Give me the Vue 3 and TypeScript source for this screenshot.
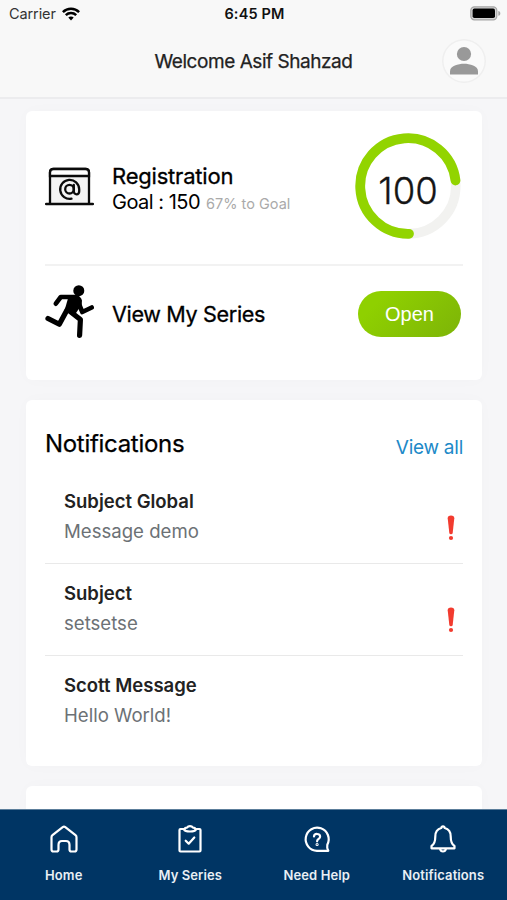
<script setup lang="ts">
interface Notice {
  subject: string
  message: string
  urgent: boolean
}

interface Tab {
  label: string
  icon: 'home' | 'series' | 'help' | 'bell'
}

const goal = { title: 'Registration', target: 150, percent: 67, value: 100 }

const notices: Notice[] = [
  { subject: 'Subject Global', message: 'Message demo', urgent: true },
  { subject: 'Subject', message: 'setsetse', urgent: true },
  { subject: 'Scott Message', message: 'Hello World!', urgent: false },
]

const tabs: Tab[] = [
  { label: 'Home', icon: 'home' },
  { label: 'My Series', icon: 'series' },
  { label: 'Need Help', icon: 'help' },
  { label: 'Notifications', icon: 'bell' },
]
</script>

<template>
  <div class="screen">
    <header class="header">
      <div class="status">
        <div class="carrier">
          <span class="carrier-name">Carrier</span>
          <svg class="wifi" viewBox="0 0 18 14" fill="none" stroke="#000" stroke-width="2.5">
            <path d="M.9 5.1C5.4.7 12.6.7 17.1 5.1" />
            <path d="M3.8 8.2c2.9-2.8 7.5-2.8 10.4 0" />
            <path d="M6.3 10.6c1.5-1.5 3.9-1.5 5.4 0L9 13.5z" fill="#000" stroke="none" />
          </svg>
        </div>
        <span class="clock">6:45 PM</span>
        <svg class="battery" viewBox="0 0 31 15">
          <rect x=".8" y=".8" width="26" height="13" rx="3.6" fill="#d5d5d5" stroke="#a5a5a5" stroke-width="1.2" />
          <rect x="2.6" y="2.6" width="22.4" height="9.4" rx="1.8" fill="#000" />
          <path d="M28.3 5c1.5.3 2 1.300 2 2.400s-.5 2.100-2 2.400z" fill="#a5a5a5" />
        </svg>
      </div>
      <div class="titlebar">
        <h1 class="welcome">Welcome Asif Shahzad</h1>
        <button class="avatar" type="button" aria-label="Profile">
          <svg viewBox="0 0 44 44">
            <circle cx="22" cy="15" r="7.1" fill="#999" />
            <path d="M8 35.500v-3.300c0-5.400 8.300-7.400 14-7.400s14 2 14 7.400v3.300z" fill="#999" />
          </svg>
        </button>
      </div>
    </header>

    <main class="content">
      <section class="card summary">
        <div class="goal-row">
          <svg class="laptop" viewBox="0 0 49 39" fill="none" stroke="#0b0b0b" stroke-linecap="round" stroke-width="2.300">
            <path d="M5 36V5.500Q5 2 8.500 2h32Q44 2 44 5.500V36" fill="#f3f3f3" />
            <path d="M5 9V5.500Q5 2 8.500 2h32Q44 2 44 5.500V9z" fill="#fff" />
            <path d="M1.200 37h46.600" stroke-width="2.500" />
            <path d="M26.500 31.700a9.500 9.500 0 1 1 7.700-9.500v2.100c0 4-5.400 4-5.400 0v-6.500" />
            <circle cx="24.500" cy="22.200" r="4.300" />
          </svg>
          <div class="goal-text">
            <h2 class="row-title">{{ goal.title }}</h2>
            <p class="goal-line">
              <span class="goal-target">Goal : {{ goal.target }}</span>
              <span class="goal-percent">{{ goal.percent }}% to Goal</span>
            </p>
          </div>
          <div class="ring">
            <svg viewBox="0 0 106 106" fill="none" stroke-linecap="round">
              <circle cx="53" cy="53" r="47.800" stroke="#f2f2f0" stroke-width="9.500" />
              <path d="M54 100.800A47.800 47.800 0 1 1 100.500 47.500" stroke="#92d400" stroke-width="9.800" />
            </svg>
            <span class="ring-value">{{ goal.value }}</span>
          </div>
        </div>
        <div class="series-row">
          <svg class="runner" viewBox="0 0 49 54">
            <circle cx="33.800" cy="5.700" r="5.500" />
            <g fill="none" stroke="#000" stroke-linecap="round" stroke-linejoin="round" stroke-width="4.600">
              <path d="M10.800 18.700 15.800 12H30" />
              <path d="M32.500 15.500 37.300 27 46.700 22.500" />
              <path d="M22 25 14.300 39.300 3 33.500" stroke-width="5.200" />
              <path d="M24.500 26 35.400 34.500 34.600 50.300" stroke-width="5.200" />
            </g>
            <path d="M24 10h8q3.500 1 5 5.500l-.3 4L29 31l-9.500-5.500z" />
          </svg>
          <h2 class="row-title series-title">View My Series</h2>
          <button class="open" type="button">Open</button>
        </div>
      </section>

      <section class="card notices">
        <div class="notices-head">
          <h2 class="notices-title">Notifications</h2>
          <a class="view-all">View all</a>
        </div>
        <ul class="notice-list">
          <li v-for="notice in notices" :key="notice.subject" class="notice">
            <div class="notice-text">
              <h3 class="subject">{{ notice.subject }}</h3>
              <p class="message">{{ notice.message }}</p>
            </div>
            <svg v-if="notice.urgent" class="urgent" viewBox="0 0 8 26" fill="#f23b2f">
              <path d="M.7 3.300Q.7.500 4 .500t3.300 2.800L5.700 18Q5.500 19.300 4 19.300T2.300 18z" />
              <ellipse cx="4" cy="22.900" rx="2.100" ry="2" />
            </svg>
          </li>
        </ul>
      </section>

      <section class="card next"></section>
    </main>

    <nav class="tabs">
      <a v-for="tab in tabs" :key="tab.label" class="tab">
        <svg
          class="tab-icon"
          viewBox="0 0 30 30"
          fill="none"
          stroke="#fff"
          stroke-width="2.200"
          stroke-linecap="round"
          stroke-linejoin="round"
        >
          <template v-if="tab.icon === 'home'">
            <path d="M2.500 12.200Q2.500 11 3.500 10.200L13.700 2.200Q15 1.200 16.300 2.200L26.500 10.200Q27.500 11 27.500 12.200V24.500Q27.500 26.500 25.500 26.500H22.500Q20.500 26.500 20.500 24.500V20Q20.500 16 17 16H13Q9.500 16 9.500 20V24.500Q9.500 26.500 7.500 26.500H4.500Q2.500 26.500 2.500 24.500Z" />
          </template>
          <template v-else-if="tab.icon === 'series'">
            <path d="M9.500 4H5.500Q4.500 4 4.500 5V25.500Q4.500 26.500 5.500 26.500H24.500Q25.500 26.500 25.500 25.500V5Q25.500 4 24.500 4H20.500" />
            <path d="M9 4.500Q10 2.700 12 2.700 13 1.200 15 1.200T18 2.700Q20 2.700 21 4.500 20 6.500 15 6.500T9 4.500Z" />
            <path d="M10.700 15.700 13.700 18.700 19.300 12.500" />
          </template>
          <template v-else-if="tab.icon === 'help'">
            <path d="M26.300 25.800H15A11.500 11.600 0 1 1 25.300 19.700Q24.700 22.500 26.300 25.800Z" />
            <path d="M12 11.500C12.200 8 18.300 8.200 18.100 11.700 18 14 15.100 13.800 15.100 16.300" />
            <circle cx="15.100" cy="19.500" r=".5" />
          </template>
          <template v-else>
            <path d="M15 1.300Q16.500 1.300 16.700 3C21 4 22.700 7.200 22.700 11.500 22.700 16.500 24 19.500 26.500 21V23.300H3.500V21C6 19.500 7.300 16.500 7.300 11.500 7.300 7.200 9 4 13.300 3Q13.500 1.300 15 1.300Z" />
            <path d="M12.200 24.300Q12.700 26.500 15 26.500T17.800 24.300" />
          </template>
        </svg>
        <span class="tab-label">{{ tab.label }}</span>
      </a>
    </nav>
  </div>
</template>

<style>
body {
  margin: 0;
  background: #f6f6f8;
}
</style>

<style scoped>
.screen {
  display: flex;
  flex-direction: column;
  height: 900px;
  overflow: hidden;
  background: #f6f6f8;
  color: #000;
  font-family: Inter, 'Liberation Sans', sans-serif;
  white-space: nowrap;
}
h1,
h2,
h3,
p,
ul {
  margin: 0;
  padding: 0;
  font-weight: 400;
}
svg {
  display: block;
  flex: none;
}
button {
  border: 0;
  padding: 0;
}
.header {
  flex: none;
  height: 97px;
  background: #f8f8f8;
  border-bottom: 2px solid #ececee;
}
.status {
  display: grid;
  grid-template-columns: 1fr auto 1fr;
  align-items: center;
  height: 27px;
  padding: 0 6px 0 8px;
}
.carrier {
  display: flex;
  align-items: center;
  gap: 6px;
}
.carrier-name {
  padding-left: 1px;
  font-size: 14.500px;
  letter-spacing: -0.100px;
  color: #333;
}
.wifi {
  width: 18px;
  height: 14px;
}
.clock {
  font-size: 14.500px;
  letter-spacing: 0.150px;
  font-weight: 600;
  color: #111;
}
.battery {
  justify-self: end;
  width: 31px;
  height: 15px;
}
.titlebar {
  display: grid;
  grid-template-columns: 1fr auto 1fr;
  align-items: center;
  height: 67px;
  padding: 0 21px;
}
.welcome {
  grid-column: 2;
  padding-top: 1px;
  font-size: 19px;
  letter-spacing: -0.450px;
  color: #222;
  -webkit-text-stroke: 0.250px #222;
}
.avatar {
  justify-self: end;
  width: 44px;
  height: 44px;
  background: #fafafa;
  border-radius: 50%;
  box-shadow: inset 0 0 0 1.5px #efefef;
}
.content {
  display: flex;
  flex: 1;
  flex-direction: column;
  gap: 20px;
  min-height: 0;
  padding: 12px 25px 0 26px;
  overflow: hidden;
}
.card {
  flex: none;
  box-sizing: border-box;
  background: #fff;
  border-radius: 6px;
  box-shadow: 0 0 16px rgba(20, 30, 70, 0.02);
}
.summary {
  height: 269px;
  padding: 0 19px;
}
.goal-row {
  display: flex;
  align-items: center;
  box-sizing: border-box;
  height: 155px;
  padding-right: 2px;
  padding-bottom: 5px;
  border-bottom: 2px solid #f2f2f2;
}
.laptop {
  width: 49px;
  height: 39px;
  margin-top: 3px;
}
.goal-text {
  flex: 1;
  margin-left: 18px;
  padding-top: 9px;
}
.row-title {
  font-size: 22px;
  line-height: 26px;
  letter-spacing: -0.200px;
  -webkit-text-stroke: 0.300px #000;
}
.goal-line {
  display: flex;
  align-items: baseline;
  gap: 6px;
  line-height: 26px;
}
.goal-target {
  font-size: 20px;
  letter-spacing: -0.500px;
}
.goal-percent {
  font-size: 14.500px;
  color: #aaa;
}
.ring {
  display: grid;
  place-items: center;
  width: 106px;
  height: 106px;
  margin-top: 1px;
}
.ring > * {
  grid-area: 1 / 1;
}
.ring-value {
  padding-top: 11px;
  font-size: 36.500px;
  color: #151515;
  font-weight: 300;
  -webkit-text-stroke: 0.300px #151515;
}
.series-row {
  display: flex;
  align-items: center;
  height: 95px;
  padding-right: 2px;
}
.runner {
  width: 49px;
  height: 54px;
  margin-bottom: 3px;
}
.series-title {
  flex: 1;
  margin-left: 18px;
  padding-top: 1px;
  font-size: 21.600px;
  letter-spacing: -0.350px;
}
.open {
  width: 103px;
  height: 46px;
  padding-top: 1px;
  background: linear-gradient(135deg, #8fd000 20%, #7db408);
  border-radius: 23px;
  color: #fff;
  font: 20px 'Liberation Sans', Arial, sans-serif;
}
.notices {
  height: 366px;
  padding: 24px 19px 0;
}
.notices-head {
  display: flex;
  align-items: baseline;
  justify-content: space-between;
  height: 48px;
}
.notices-title {
  font-size: 24px;
  line-height: 40px;
  letter-spacing: -0.300px;
  -webkit-text-stroke: 0.250px #000;
}
.view-all {
  position: relative;
  top: 2px;
  font-size: 19px;
  letter-spacing: -0.250px;
  color: #2089c8;
}
.notice-list {
  list-style: none;
}
.notice {
  display: flex;
  align-items: center;
  justify-content: space-between;
  box-sizing: border-box;
  height: 92px;
  padding: 0 8px 0 19px;
  border-bottom: 1px solid #e9e9e9;
}
.notice:last-child {
  border-bottom-color: transparent;
}
.notice-text {
  padding-bottom: 1px;
}
.subject {
  font-size: 18.500px;
  line-height: 29px;
  font-weight: 600;
  color: #222;
}
.message {
  font-size: 18.600px;
  line-height: 31px;
  color: #6c7175;
}
.urgent {
  width: 8px;
  height: 26px;
  margin-top: 20px;
}
.next {
  height: 60px;
}
.tabs {
  display: grid;
  flex: none;
  grid-template-columns: repeat(4, 126.500px);
  box-sizing: border-box;
  height: 91px;
  background: #003564;
  border-top: 1px solid #5c7e9b;
}
.tab {
  display: flex;
  flex-direction: column;
  align-items: center;
  padding: 15px 0 0 1px;
}
.tab-icon {
  width: 30px;
  height: 30px;
}
.tab-label {
  margin-top: 11px;
  font-size: 13px;
  line-height: 18px;
  font-weight: 600;
  letter-spacing: 0.100px;
  color: #e9eff5;
}
</style>
